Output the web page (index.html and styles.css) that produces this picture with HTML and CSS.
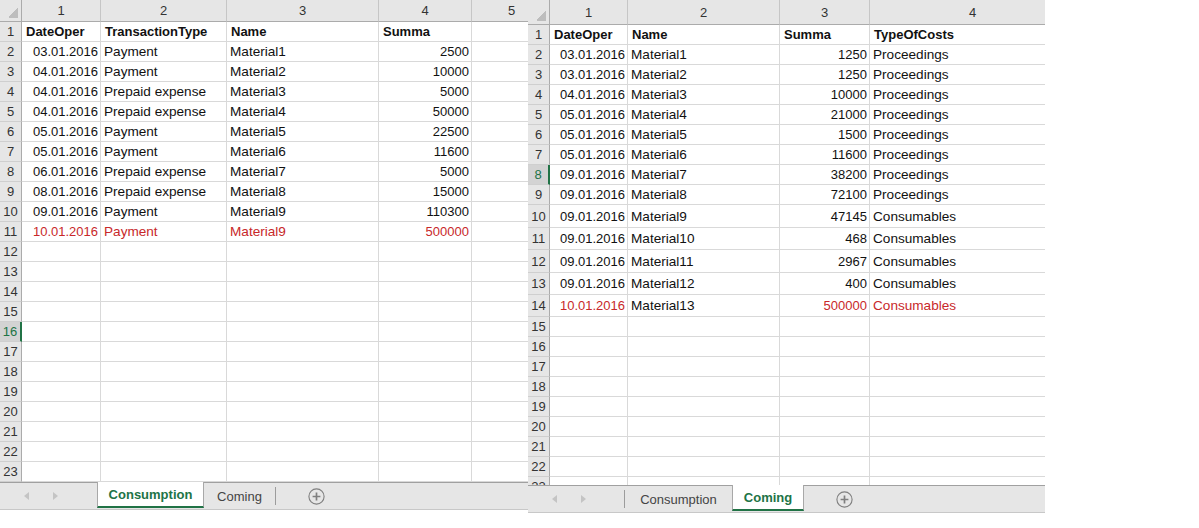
FILE: index.html
```html
<!DOCTYPE html>
<html>
<head>
<meta charset="utf-8">
<link rel="stylesheet" href="styles.css">
</head>
<body>
<div class="screen">
  <div class="book book-left">
    <div class="sheet sheet-left">
      <div class="corner"></div><div class="ch">1</div><div class="ch">2</div><div class="ch">3</div><div class="ch">4</div><div class="ch">5</div>
      <div class="rh">1</div><div class="c b">DateOper</div><div class="c b">TransactionType</div><div class="c b">Name</div><div class="c b">Summa</div><div class="c"></div>
      <div class="rh">2</div><div class="c n">03.01.2016</div><div class="c">Payment</div><div class="c">Material1</div><div class="c n">2500</div><div class="c"></div>
      <div class="rh">3</div><div class="c n">04.01.2016</div><div class="c">Payment</div><div class="c">Material2</div><div class="c n">10000</div><div class="c"></div>
      <div class="rh">4</div><div class="c n">04.01.2016</div><div class="c">Prepaid expense</div><div class="c">Material3</div><div class="c n">5000</div><div class="c"></div>
      <div class="rh">5</div><div class="c n">04.01.2016</div><div class="c">Prepaid expense</div><div class="c">Material4</div><div class="c n">50000</div><div class="c"></div>
      <div class="rh">6</div><div class="c n">05.01.2016</div><div class="c">Payment</div><div class="c">Material5</div><div class="c n">22500</div><div class="c"></div>
      <div class="rh">7</div><div class="c n">05.01.2016</div><div class="c">Payment</div><div class="c">Material6</div><div class="c n">11600</div><div class="c"></div>
      <div class="rh">8</div><div class="c n">06.01.2016</div><div class="c">Prepaid expense</div><div class="c">Material7</div><div class="c n">5000</div><div class="c"></div>
      <div class="rh">9</div><div class="c n">08.01.2016</div><div class="c">Prepaid expense</div><div class="c">Material8</div><div class="c n">15000</div><div class="c"></div>
      <div class="rh">10</div><div class="c n">09.01.2016</div><div class="c">Payment</div><div class="c">Material9</div><div class="c n">110300</div><div class="c"></div>
      <div class="rh">11</div><div class="c n red">10.01.2016</div><div class="c red">Payment</div><div class="c red">Material9</div><div class="c n red">500000</div><div class="c"></div>
      <div class="rh">12</div><div class="c"></div><div class="c"></div><div class="c"></div><div class="c"></div><div class="c"></div>
      <div class="rh">13</div><div class="c"></div><div class="c"></div><div class="c"></div><div class="c"></div><div class="c"></div>
      <div class="rh">14</div><div class="c"></div><div class="c"></div><div class="c"></div><div class="c"></div><div class="c"></div>
      <div class="rh">15</div><div class="c"></div><div class="c"></div><div class="c"></div><div class="c"></div><div class="c"></div>
      <div class="rh sel">16</div><div class="c"></div><div class="c"></div><div class="c"></div><div class="c"></div><div class="c"></div>
      <div class="rh">17</div><div class="c"></div><div class="c"></div><div class="c"></div><div class="c"></div><div class="c"></div>
      <div class="rh">18</div><div class="c"></div><div class="c"></div><div class="c"></div><div class="c"></div><div class="c"></div>
      <div class="rh">19</div><div class="c"></div><div class="c"></div><div class="c"></div><div class="c"></div><div class="c"></div>
      <div class="rh">20</div><div class="c"></div><div class="c"></div><div class="c"></div><div class="c"></div><div class="c"></div>
      <div class="rh">21</div><div class="c"></div><div class="c"></div><div class="c"></div><div class="c"></div><div class="c"></div>
      <div class="rh">22</div><div class="c"></div><div class="c"></div><div class="c"></div><div class="c"></div><div class="c"></div>
      <div class="rh">23</div><div class="c"></div><div class="c"></div><div class="c"></div><div class="c"></div><div class="c"></div>
    </div>
    <div class="tabbar">
      <div class="nav"><span class="arr-l"></span><span class="arr-r"></span></div>
      <div class="tab active t-cons">Consumption</div>
      <div class="tab t-com">Coming</div>
      <div class="sep"></div>
      <div class="add"><svg width="17" height="17" viewBox="0 0 17 17"><circle cx="8.5" cy="8.5" r="7.6" fill="none" stroke="#7f7f7f" stroke-width="1.1"/><path d="M8.5 4.6v7.8M4.6 8.5h7.8" stroke="#7f7f7f" stroke-width="1.7"/></svg></div>
    </div>
  </div>

  <div class="book book-right">
    <div class="sheet sheet-right">
      <div class="corner"></div><div class="ch">1</div><div class="ch">2</div><div class="ch">3</div><div class="ch">4</div>
      <div class="rh">1</div><div class="c b">DateOper</div><div class="c b">Name</div><div class="c b">Summa</div><div class="c b">TypeOfCosts</div>
      <div class="rh">2</div><div class="c n">03.01.2016</div><div class="c">Material1</div><div class="c n">1250</div><div class="c">Proceedings</div>
      <div class="rh">3</div><div class="c n">03.01.2016</div><div class="c">Material2</div><div class="c n">1250</div><div class="c">Proceedings</div>
      <div class="rh">4</div><div class="c n">04.01.2016</div><div class="c">Material3</div><div class="c n">10000</div><div class="c">Proceedings</div>
      <div class="rh">5</div><div class="c n">05.01.2016</div><div class="c">Material4</div><div class="c n">21000</div><div class="c">Proceedings</div>
      <div class="rh">6</div><div class="c n">05.01.2016</div><div class="c">Material5</div><div class="c n">1500</div><div class="c">Proceedings</div>
      <div class="rh">7</div><div class="c n">05.01.2016</div><div class="c">Material6</div><div class="c n">11600</div><div class="c">Proceedings</div>
      <div class="rh sel">8</div><div class="c n">09.01.2016</div><div class="c">Material7</div><div class="c n">38200</div><div class="c">Proceedings</div>
      <div class="rh">9</div><div class="c n">09.01.2016</div><div class="c">Material8</div><div class="c n">72100</div><div class="c">Proceedings</div>
      <div class="rh">10</div><div class="c n">09.01.2016</div><div class="c">Material9</div><div class="c n">47145</div><div class="c">Consumables</div>
      <div class="rh">11</div><div class="c n">09.01.2016</div><div class="c">Material10</div><div class="c n">468</div><div class="c">Consumables</div>
      <div class="rh">12</div><div class="c n">09.01.2016</div><div class="c">Material11</div><div class="c n">2967</div><div class="c">Consumables</div>
      <div class="rh">13</div><div class="c n">09.01.2016</div><div class="c">Material12</div><div class="c n">400</div><div class="c">Consumables</div>
      <div class="rh">14</div><div class="c n red">10.01.2016</div><div class="c">Material13</div><div class="c n red">500000</div><div class="c red">Consumables</div>
      <div class="rh">15</div><div class="c"></div><div class="c"></div><div class="c"></div><div class="c"></div>
      <div class="rh">16</div><div class="c"></div><div class="c"></div><div class="c"></div><div class="c"></div>
      <div class="rh">17</div><div class="c"></div><div class="c"></div><div class="c"></div><div class="c"></div>
      <div class="rh">18</div><div class="c"></div><div class="c"></div><div class="c"></div><div class="c"></div>
      <div class="rh">19</div><div class="c"></div><div class="c"></div><div class="c"></div><div class="c"></div>
      <div class="rh">20</div><div class="c"></div><div class="c"></div><div class="c"></div><div class="c"></div>
      <div class="rh">21</div><div class="c"></div><div class="c"></div><div class="c"></div><div class="c"></div>
      <div class="rh">22</div><div class="c"></div><div class="c"></div><div class="c"></div><div class="c"></div>
      <div class="rh">23</div><div class="c"></div><div class="c"></div><div class="c"></div><div class="c"></div>
    </div>
    <div class="tabbar">
      <div class="nav"><span class="arr-l"></span><span class="arr-r"></span></div>
      <div class="sep"></div>
      <div class="tab t-cons">Consumption</div>
      <div class="tab active t-com">Coming</div>
      <div class="add"><svg width="17" height="17" viewBox="0 0 17 17"><circle cx="8.5" cy="8.5" r="7.6" fill="none" stroke="#7f7f7f" stroke-width="1.1"/><path d="M8.5 4.6v7.8M4.6 8.5h7.8" stroke="#7f7f7f" stroke-width="1.7"/></svg></div>
    </div>
  </div>
</div>
</body>
</html>
```

FILE: styles.css
```css
* { box-sizing: border-box; }
html, body { margin: 0; padding: 0; background: #fff; }
body {
  font-family: "Liberation Sans", Arial, sans-serif;
  font-size: 13px;
  color: #000;
}
.screen { display: flex; align-items: flex-start; }
.book { display: flex; flex-direction: column; overflow: hidden; }
.book-left { width: 528px; }
.book-right { width: 517px; }

.sheet { display: grid; overflow: hidden; width: 100%; }
.sheet-left {
  height: 482px;
  grid-template-columns: 22px 79px 126px 152px 93px 80px;
  grid-template-rows: 22px repeat(23, 20px);
}
.sheet-right {
  height: 485px;
  grid-template-columns: 22px 78px 152px 90px 206px;
  grid-template-rows: 25px repeat(9, 20px) 23px 22px 23px 22px 22px repeat(9, 20px);
}

.c {
  border-right: 1px solid #d9d9d9;
  border-bottom: 1px solid #d9d9d9;
  padding: 0 2px 0 3px;
  display: flex;
  align-items: center;
  white-space: nowrap;
  overflow: hidden;
  font-size: 13.6px;
  color: #111;
}
.n { justify-content: flex-end; font-size: 13px; }
.b { font-weight: bold; font-size: 13px; padding-left: 4px; }
.red { color: #c8282a; }

.corner {
  border-right: 1px solid #ababab;
  border-bottom: 1px solid #ababab;
  background: linear-gradient(135deg, transparent 50%, #bdbdbd 50%) no-repeat right 3px bottom 3px / 9px 11px, #e6e6e6;
}
.ch {
  background: #e6e6e6;
  border-right: 1px solid #c6c6c6;
  border-bottom: 1px solid #ababab;
  color: #333;
  display: flex;
  align-items: center;
  justify-content: center;
}
.rh {
  background: #e6e6e6;
  border-right: 1px solid #ababab;
  border-bottom: 1px solid #cfcfcf;
  color: #333;
  display: flex;
  align-items: center;
  justify-content: center;
}
.rh.sel {
  background: #d3d3d3;
  color: #217346;
  border-right: 2px solid #217346;
}

.tabbar {
  height: 28px;
  background: #e6e6e6;
  border-top: 1px solid #a0a0a0;
  border-bottom: 1px solid #c8c8c8;
  display: flex;
  align-items: flex-start;
  color: #444;
}
.nav {
  width: 96px;
  height: 100%;
  display: flex;
  align-items: center;
  padding-left: 24px;
  gap: 24px;
  flex-shrink: 0;
}
.book-left .nav { width: 97px; }
.arr-l {
  width: 0; height: 0;
  border-top: 4px solid transparent;
  border-bottom: 4px solid transparent;
  border-right: 5px solid #c4c4c4;
}
.arr-r {
  width: 0; height: 0;
  border-top: 4px solid transparent;
  border-bottom: 4px solid transparent;
  border-left: 5px solid #c4c4c4;
}
.tab {
  height: 26px;
  display: flex;
  align-items: center;
  justify-content: center;
  flex-shrink: 0;
  white-space: nowrap;
}
.t-cons { width: 107px; }
.t-com { width: 72px; }
.book-left .t-com { width: 71px; }
.tab.active {
  margin-top: -1px;
  height: 26px;
  background: #fff;
  color: #217346;
  font-weight: bold;
  border-left: 1px solid #a8a8a8;
  border-right: 1px solid #a8a8a8;
  border-bottom: 2px solid #217346;
}
.sep {
  width: 1px;
  height: 18px;
  margin-top: 4px;
  background: #9c9c9c;
  flex-shrink: 0;
}
.add {
  margin-left: 32px;
  height: 26px;
  display: flex;
  align-items: center;
}
.add svg { display: block; }
```
